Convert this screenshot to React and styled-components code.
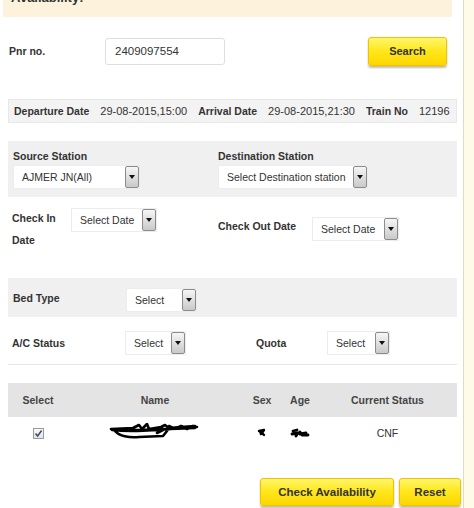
import React from "react";
import styled, { createGlobalStyle } from "styled-components";

const GlobalStyle = createGlobalStyle`
  html, body {
    margin: 0;
    padding: 0;
    background: #ffffff;
  }
  body {
    font-family: "Liberation Sans", Arial, sans-serif;
    color: #333;
  }
`;

const Page = styled.div`
  display: flex;
  width: 474px;
  height: 508px;
  overflow: hidden;
`;

const Main = styled.div`
  width: 449px;
  padding: 0 6px 0 8px;
  flex-shrink: 0;
`;

const Side = styled.div`
  flex: 1;
  border-left: 1px solid #dcdccc;
  background: #fffbe9;
`;

const Header = styled.div`
  height: 17px;
  margin-left: -5px;
  width: 449px;
  background: #fdf3dd;
  overflow: hidden;
`;

const HeaderText = styled.div`
  margin-top: -10px;
  padding-left: 8px;
  font-size: 13px;
  line-height: 16px;
  font-weight: bold;
  color: #333;
`;

const PnrRow = styled.div`
  display: flex;
  align-items: center;
  margin-top: 19px;
  height: 30px;
  padding-left: 1px;
`;

const PnrLabel = styled.div`
  width: 96px;
  font-size: 10.5px;
  font-weight: bold;
`;

const TextInput = styled.div`
  box-sizing: border-box;
  width: 120px;
  height: 27px;
  border: 1px solid #dedede;
  border-radius: 3px;
  padding-left: 9px;
  display: flex;
  align-items: center;
  font-size: 11.5px;
  color: #333;
`;

const YellowButton = styled.button`
  box-sizing: border-box;
  height: ${(p) => p.$h || 28}px;
  width: ${(p) => p.$w}px;
  margin-left: ${(p) => p.$ml || 0}px;
  margin-right: ${(p) => p.$mr || 0}px;
  border: 1px solid #edc400;
  border-radius: 3px;
  background: linear-gradient(#fff56e 0%, #ffe81e 45%, #fdd600 100%);
  box-shadow: 0 2px 2px rgba(90, 70, 0, 0.35);
  font-family: "Liberation Sans", Arial, sans-serif;
  font-size: ${(p) => p.$fs || 11.5}px;
  font-weight: bold;
  color: #333;
  padding: 0;
  cursor: pointer;
`;

const Spacer = styled.div`
  flex: 1;
`;

const InfoBar = styled.div`
  box-sizing: border-box;
  display: flex;
  align-items: center;
  gap: 11px;
  margin-top: 33px;
  height: 24px;
  padding-left: 5px;
  background: #f3f3f3;
  border: 1px solid #e8e8e8;
  font-size: 11px;
  white-space: nowrap;
`;

const Bold = styled.span`
  font-weight: bold;
  font-size: 10.5px;
`;

const GrayPanel = styled.div`
  display: flex;
  align-items: center;
  margin-top: ${(p) => p.$mt}px;
  height: ${(p) => p.$h}px;
  padding-left: 5px;
  background: #f0f0f0;
  box-sizing: border-box;
`;

const Col = styled.div`
  width: ${(p) => p.$w}px;
  height: ${(p) => (p.$h ? `${p.$h}px` : "auto")};
  display: flex;
  flex-direction: ${(p) => (p.$stack ? "column" : "row")};
  align-items: ${(p) => (p.$stack ? "flex-start" : p.$align || "center")};
`;

const Label = styled.div`
  font-size: 10.5px;
  font-weight: bold;
  flex-shrink: 0;
  width: ${(p) => (p.$w ? `${p.$w}px` : "auto")};
  line-height: ${(p) => p.$lh || 14}px;
  margin-top: ${(p) => p.$mt || 0}px;
  margin-bottom: ${(p) => p.$mb || 0}px;
`;

const SelectBox = styled.div`
  box-sizing: border-box;
  position: relative;
  width: ${(p) => p.$w}px;
  height: 24px;
  margin-top: ${(p) => p.$mt || 0}px;
  background: #ffffff;
  border: 1px solid #ececec;
  padding-left: 8px;
  padding-right: 14px;
  display: flex;
  align-items: center;
  font-size: 10.5px;
  color: #333;
  white-space: nowrap;
  overflow: hidden;
`;

const Arrow = styled.span`
  position: absolute;
  right: 0;
  top: 0;
  box-sizing: border-box;
  width: 14px;
  height: 22px;
  border: 1px solid #8c8c8c;
  border-radius: 2px;
  background: linear-gradient(#f6f6f6, #c9c9c9);
  display: flex;
  align-items: center;
  justify-content: center;
  &::after {
    content: "";
    border-left: 3px solid transparent;
    border-right: 3px solid transparent;
    border-top: 4px solid #111;
  }
`;

const Row = styled.div`
  display: flex;
  align-items: ${(p) => p.$align || "center"};
  margin-top: ${(p) => p.$mt}px;
  height: ${(p) => p.$h}px;
  padding-left: 4px;
  border-bottom: ${(p) => (p.$line ? "1px solid #e6e6e6" : "none")};
  box-sizing: border-box;
`;

const Table = styled.div`
  margin-top: 18px;
`;

const TableRow = styled.div`
  display: grid;
  grid-template-columns: 60px 174px 40px 36px 1fr;
  align-items: center;
  height: ${(p) => p.$h}px;
  background: ${(p) => p.$bg || "transparent"};
  font-size: 10.5px;
  font-weight: ${(p) => (p.$head ? "bold" : "normal")};
  color: ${(p) => (p.$head ? "#444" : "#333")};
`;

const Cell = styled.div`
  display: flex;
  justify-content: center;
  align-items: center;
`;

const CheckBox = styled.span`
  box-sizing: border-box;
  width: 11px;
  height: 11px;
  border: 1px solid #9a9a9a;
  background: linear-gradient(#fafafa, #e4e4e4);
  display: flex;
  align-items: center;
  justify-content: center;
`;

const Actions = styled.div`
  display: flex;
  justify-content: flex-end;
  margin-top: 29px;
  margin-right: -4px;
`;

const Scribble = ({ w, h, d, sw = 2.6 }) => (
  <svg width={w} height={h} viewBox={`0 0 ${w} ${h}`}>
    <path d={d} fill="none" stroke="#000" strokeWidth={sw} strokeLinecap="round" strokeLinejoin="round" />
  </svg>
);

const Select = ({ w, mt, children }) => (
  <SelectBox $w={w} $mt={mt}>
    {children}
    <Arrow />
  </SelectBox>
);

export default function App() {
  return (
    <>
      <GlobalStyle />
      <Page>
        <Main>
          <Header>
            <HeaderText>Availability:</HeaderText>
          </Header>

          <PnrRow>
            <PnrLabel>Pnr no.</PnrLabel>
            <TextInput>2409097554</TextInput>
            <Spacer />
            <YellowButton $w={79} $h={29} $mr={10} $fs={11}>Search</YellowButton>
          </PnrRow>

          <InfoBar>
            <Bold>Departure Date</Bold>
            <span>29-08-2015,15:00</span>
            <Bold>Arrival Date</Bold>
            <span>29-08-2015,21:30</span>
            <Bold>Train No</Bold>
            <span>12196</span>
          </InfoBar>

          <GrayPanel $mt={18} $h={56}>
            <Col $w={205} $stack>
              <Label $mb={2}>Source Station</Label>
              <Select w={127}>AJMER JN(All)</Select>
            </Col>
            <Col $w={200} $stack>
              <Label $mb={2}>Destination Station</Label>
              <Select w={150}>Select Destination station</Select>
            </Col>
          </GrayPanel>

          <Row $mt={10} $h={44} $align="flex-start">
            <Col $w={206} $align="flex-start">
              <Label $w={59} $lh={22}>Check In Date</Label>
              <Select w={86} mt={1}>Select Date</Select>
            </Col>
            <Col $w={200} $h={44}>
              <Label $w={94} $mt={-7}>Check Out Date</Label>
              <Select w={87}>Select Date</Select>
            </Col>
          </Row>

          <GrayPanel $mt={27} $h={39}>
            <Label $w={113} $mt={1}>Bed Type</Label>
            <Select w={71} mt={4}>Select</Select>
          </GrayPanel>

          <Row $mt={14} $h={34} $line $align="flex-start">
            <Col $w={244}>
              <Label $w={113} $mt={-1}>A/C Status</Label>
              <Select w={61}>Select</Select>
            </Col>
            <Col $w={200}>
              <Label $w={71} $mt={-1}>Quota</Label>
              <Select w={63}>Select</Select>
            </Col>
          </Row>

          <Table>
            <TableRow $head $h={34} $bg="#e4e4e4">
              <Cell>Select</Cell>
              <Cell>Name</Cell>
              <Cell>Sex</Cell>
              <Cell>Age</Cell>
              <Cell>Current Status</Cell>
            </TableRow>
            <TableRow $h={32}>
              <Cell>
                <CheckBox>
                  <svg width="9" height="9" viewBox="0 0 9 9">
                    <path d="M1.5 4.5 L3.6 7 L7.6 1.5" fill="none" stroke="#3a4a6a" strokeWidth="1.5" />
                  </svg>
                </CheckBox>
              </Cell>
              <Cell>
                <Scribble
                  w={92}
                  h={20}
                  d="M2 6 L24 5 L30 2 L33 6 L38 1 L40 6 L52 4 L56 2 L60 5 L72 4 L86 3 M3 7 C20 9 40 8 88 4 M4 6 C10 8 30 7 86 5 M6 8 C10 13 20 15 30 14 L54 13 L58 8 M48 10 L56 6 M60 3 L66 6 L72 3 L78 6 L84 3"
                />
              </Cell>
              <Cell>
                <Scribble w={10} h={10} sw={2.4} d="M2 3 L7 2 L5 5 L7 7 M3 3 L4 6" />
              </Cell>
              <Cell>
                <Scribble w={20} h={10} sw={2.8} d="M3 3 L7 2 M2 6 L8 5 L6 8 M10 4 L12 7 L18 7 M10 6 L16 5" />
              </Cell>
              <Cell>CNF</Cell>
            </TableRow>
          </Table>

          <Actions>
            <YellowButton $w={134}>Check Availability</YellowButton>
            <YellowButton $w={62} $ml={5}>Reset</YellowButton>
          </Actions>
        </Main>
        <Side />
      </Page>
    </>
  );
}
